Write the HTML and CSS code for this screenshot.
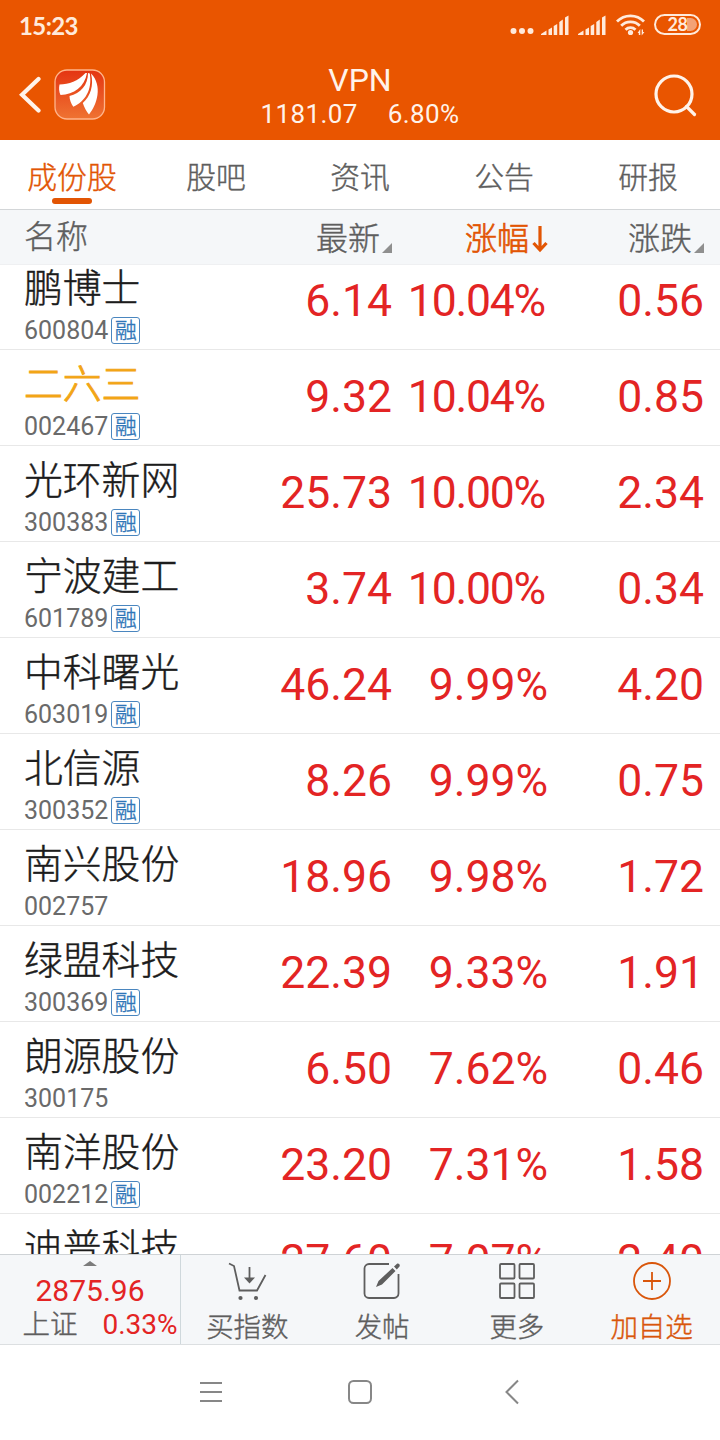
FILE: index.html
```html
<!DOCTYPE html>
<html lang="zh-CN">

<head>
    <meta charset="UTF-8">
    <meta name="viewport" content="width=device-width, initial-scale=1.0">
    <title>VPN</title>
    <link rel="stylesheet" href="styles.css">
</head>

<body>
    <div class="wrap">
        <!-- 状态栏 -->
        <div class="status_bar">
            <span class="time">15:23</span>
            <div class="status_icons">
                <svg class="dots" width="24" height="8" viewBox="0 0 24 8">
                    <circle cx="3.5" cy="4" r="3" />
                    <circle cx="12" cy="4" r="3" />
                    <circle cx="20.5" cy="4" r="3" />
                </svg>
                <svg class="signal" width="28" height="20" viewBox="0 0 28 20">
                    <path d="M0 20v-1l5.500-3.500v4.500zM7.500 14.500l3.500-2v7.500h-3.500zM12.700 11l3.500-2v11h-3.500zM18.300 7l3.500-2.500v15.500h-3.500zM24 2.500l3.500-2v19.500h-3.500z" />
                </svg>
                <svg class="signal signal2" width="28" height="20" viewBox="0 0 28 20">
                    <path d="M0 20v-1l5.500-3.500v4.500zM7.500 14.500l3.500-2v7.500h-3.500zM12.700 11l3.500-2v11h-3.500zM18.300 7l3.500-2.500v15.500h-3.500zM24 2.500l3.500-2v19.500h-3.500z" />
                </svg>
                <svg class="wifi" width="30" height="24" viewBox="0 0 30 24">
                    <g fill="none" stroke="#ffeadb" stroke-width="2.800">
                        <path d="M1 8.500a19 19 0 0 1 27 0" />
                        <path d="M5.200 12.700a13 13 0 0 1 18.600 0" />
                        <path d="M9.500 16.700a7.200 7.200 0 0 1 10 0" />
                    </g>
                    <circle cx="14.500" cy="19.500" r="2.600" />
                    <path d="M24.300 16v6h-1.500v-2h-1.200zM25.700 22.500v-6h1.300v2.500h1.400z" />
                </svg>
                <div class="battery"><span>28</span></div>
            </div>
        </div>

        <!-- 标题 -->
        <div class="header">
            <svg class="back" width="24" height="40" viewBox="0 0 24 40">
                <path d="M19.500 4L3 19.800 19.500 35.500" />
            </svg>
            <svg class="logo" width="52" height="52" viewBox="0 0 52 52">
                <defs>
                    <linearGradient id="logo_bg" x1="0" y1="0" x2="0" y2="1">
                        <stop offset="0" stop-color="#e43412" />
                        <stop offset="1" stop-color="#ef7332" />
                    </linearGradient>
                </defs>
                <rect x="1" y="1" width="49.500" height="49" rx="12" fill="url(#logo_bg)" stroke="#ffb58c" stroke-width="1.300" />
                <path class="stripe" d="M31.500 4C24 12 15 15.500 5.500 15.500c-.8 3.500-.5 7 1 10.500C20 25.500 30.500 18 33 4z" />
                <path class="stripe" d="M34 4c0 12-7.500 20.500-18.500 23 0 3.500 1.500 7.300 3.800 10.800C31 32.500 38.500 21 35.800 4.500z" />
                <path class="stripe" d="M37 4.500c3 12-.5 22.500-8.200 29.500 1.500 4.500 3.500 8.500 6.200 11.500C43 36 49 16.500 37 4.500z" />
            </svg>
            <div class="title">
                <div class="title_name">VPN</div>
                <div class="title_value"><span>1181.07</span><span>6.80%</span></div>
            </div>
            <svg class="search" width="44" height="44" viewBox="0 0 44 44">
                <circle cx="20" cy="20" r="18" />
                <path d="M32.500 32.500l8 8" />
            </svg>
        </div>

        <div class="tabs">
            <div class="tab active">成份股</div>
            <div class="tab">股吧</div>
            <div class="tab">资讯</div>
            <div class="tab">公告</div>
            <div class="tab">研报</div>
        </div>

        <div class="table_head">
            <div class="head_name">名称</div>
            <div class="head_cell">最新<i class="tri"></i></div>
            <div class="head_cell on">涨幅<svg width="16" height="28" viewBox="0 0 16 28">
                    <path d="M8 1v24M1.500 18L8 25l6.500-7" />
                </svg></div>
            <div class="head_cell">涨跌<i class="tri"></i></div>
        </div>

        <!-- 股票列表 -->
        <div class="list">
            <div class="row">
                <div class="stock"><div class="name">鹏博士</div><div class="code">600804<span class="rong">融</span></div></div>
                <div class="num">6.14</div><div class="num long">10.04%</div><div class="num">0.56</div>
            </div>
            <div class="row">
                <div class="stock"><div class="name own">二六三</div><div class="code">002467<span class="rong">融</span></div></div>
                <div class="num">9.32</div><div class="num long">10.04%</div><div class="num">0.85</div>
            </div>
            <div class="row">
                <div class="stock"><div class="name">光环新网</div><div class="code">300383<span class="rong">融</span></div></div>
                <div class="num">25.73</div><div class="num long">10.00%</div><div class="num">2.34</div>
            </div>
            <div class="row">
                <div class="stock"><div class="name">宁波建工</div><div class="code">601789<span class="rong">融</span></div></div>
                <div class="num">3.74</div><div class="num long">10.00%</div><div class="num">0.34</div>
            </div>
            <div class="row">
                <div class="stock"><div class="name">中科曙光</div><div class="code">603019<span class="rong">融</span></div></div>
                <div class="num">46.24</div><div class="num">9.99%</div><div class="num">4.20</div>
            </div>
            <div class="row">
                <div class="stock"><div class="name">北信源</div><div class="code">300352<span class="rong">融</span></div></div>
                <div class="num">8.26</div><div class="num">9.99%</div><div class="num">0.75</div>
            </div>
            <div class="row">
                <div class="stock"><div class="name">南兴股份</div><div class="code">002757</div></div>
                <div class="num">18.96</div><div class="num">9.98%</div><div class="num">1.72</div>
            </div>
            <div class="row">
                <div class="stock"><div class="name">绿盟科技</div><div class="code">300369<span class="rong">融</span></div></div>
                <div class="num">22.39</div><div class="num">9.33%</div><div class="num">1.91</div>
            </div>
            <div class="row">
                <div class="stock"><div class="name">朗源股份</div><div class="code">300175</div></div>
                <div class="num">6.50</div><div class="num">7.62%</div><div class="num">0.46</div>
            </div>
            <div class="row">
                <div class="stock"><div class="name">南洋股份</div><div class="code">002212<span class="rong">融</span></div></div>
                <div class="num">23.20</div><div class="num">7.31%</div><div class="num">1.58</div>
            </div>
            <div class="row">
                <div class="stock"><div class="name">迪普科技</div></div>
                <div class="num">27.60</div><div class="num">7.07%</div><div class="num">2.40</div>
            </div>
        </div>

        <!-- 底部工具栏 -->
        <div class="toolbar">
            <div class="index">
                <i class="up"></i>
                <div class="index_value">2875.96</div>
                <div class="index_row"><span>上证</span><span class="red">0.33%</span></div>
            </div>
            <div class="tool">
                <svg width="40" height="40" viewBox="0 0 40 40">
                    <path d="M2 2.500l5 2.500L12.500 29.500H30L38.500 14" />
                    <path d="M22.500 6v13" />
                    <path class="fill" d="M17 16.500h11l-5.500 6z" />
                    <circle class="fill" cx="13.500" cy="37" r="2.100" />
                    <circle class="fill" cx="29" cy="37" r="2.100" />
                </svg>
                <span>买指数</span>
            </div>
            <div class="tool">
                <svg width="40" height="40" viewBox="0 0 40 40">
                    <path d="M27 3H7a4.500 4.500 0 0 0-4.500 4.500v25A4.500 4.500 0 0 0 7 37h25a4.500 4.500 0 0 0 4.500-4.500V13" />
                    <path class="fill" d="M14 26l2.500-6L30.500 7l3 3-13.500 13.500zM32 5.500l3-2.700c1.500-.8 3.500.8 2.500 2.700l-2.700 3z" />
                </svg>
                <span>发帖</span>
            </div>
            <div class="tool">
                <svg width="40" height="40" viewBox="0 0 40 40">
                    <rect x="3" y="3" width="14.500" height="14.500" rx="1" />
                    <rect x="22.500" y="3" width="14.500" height="14.500" rx="1" />
                    <rect x="3" y="22.500" width="14.500" height="14.500" rx="1" />
                    <rect x="22.500" y="22.500" width="14.500" height="14.500" rx="1" />
                </svg>
                <span>更多</span>
            </div>
            <div class="tool add">
                <svg width="40" height="40" viewBox="0 0 40 40">
                    <circle cx="20" cy="20" r="18" />
                    <path d="M11 20h18M20 11v18" />
                </svg>
                <span>加自选</span>
            </div>
        </div>

        <div class="nav">
            <svg width="24" height="26" viewBox="0 0 24 26">
                <path d="M1 4h22M1 13h22M1 22h22" />
            </svg>
            <svg class="home" width="26" height="26" viewBox="0 0 26 26">
                <rect x="2" y="2" width="22" height="22" rx="4.500" />
            </svg>
            <svg width="16" height="26" viewBox="0 0 16 26">
                <path d="M14 1.500L2.500 13 14 24.500" />
            </svg>
        </div>
    </div>
</body>

</html>
```
FILE: styles.css
```css
body {
    margin: 0;
    background-color: #fff;
    font-family: Roboto, "Noto Sans CJK SC", sans-serif;
    color: #5e5e5e;
}

.wrap {
    display: flex;
    flex-direction: column;
    width: 720px;
    height: 1440px;
    overflow: hidden;
}

svg {
    display: block;
    flex: none;
}

/* 状态栏 */
.status_bar {
    display: flex;
    justify-content: space-between;
    align-items: center;
    height: 50px;
    padding: 0 19px;
    box-sizing: border-box;
    background-color: #e95500;
    color: #ffeadb;
}

.time {
    padding-top: 1px;
    font-family: Lato, sans-serif;
    font-size: 24px;
    font-weight: 700;
    letter-spacing: -0.6px;
}

.status_icons {
    display: flex;
    align-items: center;
    padding-bottom: 1px;
    fill: #ffeadb;
}

.dots {
    margin-top: 13px;
    margin-right: 7px;
}

.signal2 {
    margin: 0 10px 0 9px;
}

.battery {
    width: 47px;
    height: 21px;
    box-sizing: border-box;
    margin-left: 8px;
    border: 2px solid #ffeadb;
    border-radius: 11px;
    background: linear-gradient(to right, transparent 29px, #f3a276 29px) content-box;
    padding: 2px;
    font-family: Lato, sans-serif;
    font-size: 18px;
    font-weight: 700;
    line-height: 12px;
    letter-spacing: -0.5px;
    text-align: center;
}

/* 标题 */
.header {
    display: flex;
    align-items: center;
    height: 90px;
    padding: 2px 22px 0 19px;
    box-sizing: border-box;
    background-color: #e95500;
    color: #fff3ea;
}

.back,
.search {
    fill: none;
    stroke: #fff3ea;
    stroke-linecap: round;
}

.back {
    margin-bottom: 2px;
    stroke-width: 4.2;
}

.search {
    stroke-width: 3.2;
}

.logo {
    margin: 0 0 2px 11px;
}

.stripe {
    fill: #fff;
}

.title {
    flex: 1;
    padding-right: 40px;
    text-align: center;
}

.title_name {
    font-size: 32px;
    line-height: 36px;
}

.title_value {
    display: flex;
    justify-content: center;
    gap: 30px;
    font-size: 26px;
    line-height: 32px;
    letter-spacing: 0.4px;
}

/* 细体中文稍微加粗一点 */
.tab,
.table_head,
.name,
.rong,
.index_row,
.tool {
    font-weight: 300;
    -webkit-text-stroke: 0.4px currentColor;
}

/* 标签 */
.tabs {
    display: flex;
    height: 69px;
    border-bottom: 1px solid #d3d6d8;
}

.tab {
    display: flex;
    flex-direction: column;
    align-items: center;
    flex: 1;
    font-size: 29.800px;
    line-height: 76px;
}

.tab.active {
    color: #e25504;
}

.tab.active::after {
    content: "";
    width: 40px;
    height: 6px;
    margin-top: -18px;
    border-radius: 3px;
    background-color: #e25504;
}

/* 表头 */
.table_head,
.row {
    display: grid;
    grid-template-columns: 1fr 156px 156px 156px;
    padding: 0 16px 0 24px;
    box-sizing: border-box;
}

.table_head {
    height: 55px;
    background-color: #f5f7f9;
    border-bottom: 1px solid #eff0f2;
    font-size: 32px;
}

.head_name {
    line-height: 55px;
}

.head_cell {
    display: flex;
    justify-content: flex-end;
    align-items: center;
    height: 54px;
    padding-top: 5px;
    box-sizing: border-box;
    line-height: 49px;
}

.head_cell.on {
    color: #e25504;
    -webkit-text-stroke: 0.7px #e25504;
}

.head_cell svg {
    margin: 0 0 2px 3px;
    fill: none;
    stroke: #e25504;
    stroke-width: 3.2;
}

.tri {
    width: 0;
    height: 0;
    margin: 16px 0 0 2px;
    border-left: 10px solid transparent;
    border-bottom: 10px solid #8f8f8f;
}

/* 列表 */
.list {
    height: 989px;
    overflow: hidden;
}

.row {
    height: 96px;
    border-bottom: 1px solid #e8e8e8;
}

/* 第一行滚动时被表头遮住一部分 */
.row:first-child {
    margin-top: -11px;
}

.name {
    height: 62px;
    font-size: 38.800px;
    line-height: 70px;
    color: #1c1c1c;
}

.name.own {
    color: #f2a516;
    -webkit-text-stroke-width: 1px;
}

.code {
    display: flex;
    align-items: center;
    height: 28px;
    font-size: 25px;
    line-height: 27px;
    color: #6a6a6a;
}

.rong {
    width: 29px;
    height: 27px;
    box-sizing: border-box;
    margin-left: 3px;
    border: 1.500px solid #4a86bf;
    border-radius: 3px;
    font-size: 22px;
    line-height: 25px;
    text-align: center;
    color: #2f76b8;
}

.num {
    font-size: 44.500px;
    line-height: 95px;
    text-align: right;
    white-space: nowrap;
    color: #e32424;
}

.long {
    padding-right: 3px;
    letter-spacing: -1.2px;
}

/* 底部工具栏 */
.toolbar {
    display: flex;
    height: 89px;
    padding-right: 1px;
    border-top: 1px solid #cfd3d6;
    border-bottom: 1px solid #dcdfe1;
    background-color: #f5f7f9;
}

.index {
    display: flex;
    flex-direction: column;
    align-items: center;
    width: 180px;
    margin-right: -1px;
    border-right: 1px solid #cfd8dc;
}

.up {
    width: 0;
    height: 0;
    margin-top: 6px;
    border: 7px solid transparent;
    border-top: 0;
    border-bottom: 5px solid #7c7c7c;
}

.index_value {
    margin-top: 8px;
    font-size: 30px;
    line-height: 34px;
    color: #e32424;
}

.index_row {
    display: flex;
    justify-content: space-between;
    width: 155px;
    margin-left: 20px;
    font-size: 27.500px;
    line-height: 34px;
}

.red {
    font-size: 28px;
    font-weight: 400;
    -webkit-text-stroke: 0;
    color: #e32424;
}

.tool {
    display: flex;
    flex-direction: column;
    align-items: center;
    flex: 1;
    padding-top: 6px;
    font-size: 27.500px;
    line-height: 53px;
}

.tool svg {
    fill: none;
    stroke: #5e5e5e;
    stroke-width: 1.8;
}

.tool .fill {
    fill: #5e5e5e;
    stroke: none;
}

.tool.add {
    color: #d9560b;
}

.tool.add svg {
    stroke: #d9560b;
}

/* 系统导航 */
.nav {
    display: flex;
    align-items: center;
    flex: 1;
    padding: 0 0 2px 199px;
    fill: none;
    stroke: #878787;
    stroke-width: 2;
}

.home {
    margin: 0 131px 0 124px;
}
```
